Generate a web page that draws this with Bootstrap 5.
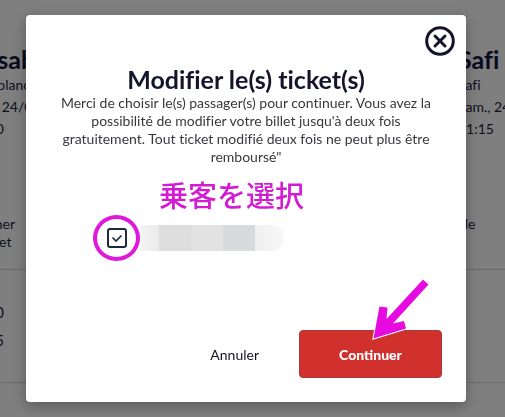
<!DOCTYPE html>
<html lang="fr">
<head>
<meta charset="utf-8">
<meta name="viewport" content="width=device-width, initial-scale=1">
<title>Modifier le(s) ticket(s)</title>
<link href="https://cdn.jsdelivr.net/npm/bootstrap@5.3.0/dist/css/bootstrap.min.css" rel="stylesheet">
<style>
body { font-family: Lato, sans-serif; font-size: 14px; line-height: 18px; font-variant-ligatures: none; color: #10101c; background: #7f7f7f; }
.trip-page { min-height: 100vh; }
.trip-title { font-size: 25px; line-height: 30px; font-weight: 700; color: #0b0b20; }
.trip-top { height: 269px; padding-top: 44px; }
.trip-from { margin-left: -32px; }
.trip-to { width: 47px; }
.trip-line { line-height: 22px; }
.trip-note { margin-top: 75px; }
.trip-note-from { width: 47px; }
.trip-prices { border-top: 1px solid #6b6b6b; border-bottom: 1px solid #6b6b6b; padding: 28px 0; line-height: 28px; font-size: 15px; }
.trip-amount { width: 36px; margin-left: -32px; }
.overlay { padding: 15px 39px 15px 26px; }
.dialog-box { background: #fff; border-radius: 4px; min-height: 387px; box-shadow: 0 4px 14px rgba(0,0,0,.3); padding: 11px 24px 24px; }
.close-btn { width: 30px; height: 30px; margin-right: -13px; }
.dialog-title { font-size: 25px; line-height: 30px; font-weight: 700; color: #14142b; margin-top: 8px; }
.dialog-text { color: #38383f; }
.hint { font: 500 29px/32px "Noto Sans CJK JP", sans-serif; color: #d31bd3; margin-top: 12px; padding-left: 109px; }
.passenger { margin: 5px 0 0 43px; height: 46px; }
.ring { width: 47px; height: 46px; border: 4px solid #df18dc; border-radius: 50%; }
.pass-check.form-check-input { width: 20px; height: 20px; border: 2px solid #1b2a40; border-radius: 3px; background-color: #fff; }
.pass-check.form-check-input:checked { border-color: #1b2a40; background-color: #fff; background-size: 16px 16px; background-image: url("data:image/svg+xml,%3Csvg xmlns='http://www.w3.org/2000/svg' viewBox='0 0 16 16'%3E%3Cpath d='M3.500 7.500l3.500 3.500 5.500-5.500' fill='none' stroke='%231b2a40' stroke-width='1.700'/%3E%3C/svg%3E"); }
.masked-name { width: 144px; height: 26px; border-radius: 0 12px 12px 0; background: linear-gradient(90deg, #f4f4f4 0, #ebebeb 19px, #dededf 19px 51px, #e2e2e3 51px 83px, #d9dadc 83px 115px, #efefef 115px, #f8f8f8); }
.cancel-btn { font-size: 14px; color: #14141f; margin-right: 28px; }
.continue-btn { width: 143px; height: 48px; border-radius: 4px; font-size: 14px; font-weight: 900; color: #fff; background: #d0312d; border: 1px solid #aa3838; }
.continue-btn:hover { background: #b92a27; color: #fff; }
.arrow { right: 14px; bottom: 35px; }
</style>
<script src="https://cdn.jsdelivr.net/npm/bootstrap@5.3.0/dist/js/bootstrap.bundle.min.js"></script>
</head>
<body>
<div class="trip-page overflow-hidden" aria-hidden="true">
  <div class="trip-top d-flex justify-content-between text-nowrap">
    <div class="trip-from">
      <div class="trip-title">Casablanca</div>
      <div class="trip-line">Casablanca</div>
      <div class="trip-line">Ven., 24/07</div>
      <div class="trip-line">10:00</div>
      <div class="trip-note trip-note-from text-end">Dîner<br>et&nbsp;</div>
    </div>
    <div class="trip-to">
      <div class="trip-title">Safi</div>
      <div class="trip-line">Safi</div>
      <div class="trip-line">Sam., 24/07</div>
      <div class="trip-line">11:15</div>
      <div class="trip-note">ille</div>
    </div>
  </div>
  <div class="trip-prices">
    <div class="trip-amount text-end">0</div>
    <div class="trip-amount text-end">5</div>
  </div>
</div>

<div class="overlay position-fixed top-0 start-0 w-100 h-100">
  <div class="dialog-box position-relative d-flex flex-column" role="dialog" aria-modal="true" aria-labelledby="dialogTitle">
    <button type="button" class="close-btn btn p-0 border-0 align-self-end d-flex" aria-label="Fermer">
      <svg width="30" height="30" viewBox="0 0 30 30" fill="none" stroke="#14142b" stroke-width="3"><circle cx="15" cy="15" r="13.3"/><path d="M10 10l10 10M20 10L10 20" stroke-linecap="round"/></svg>
    </button>
    <h1 id="dialogTitle" class="dialog-title text-center mb-0">Modifier le(s) ticket(s)</h1>
    <p class="dialog-text text-center mb-0">Merci de choisir le(s) passager(s) pour continuer. Vous avez la possibilité de modifier votre billet jusqu'à deux fois gratuitement. Tout ticket modifié deux fois ne peut plus être remboursé"</p>
    <div class="hint" lang="ja">乗客を選択</div>
    <div class="passenger d-flex align-items-center">
      <span class="ring d-flex align-items-center justify-content-center">
        <input id="passenger" class="pass-check form-check-input m-0" type="checkbox" checked aria-label="Passager">
      </span>
      <label for="passenger" class="masked-name"></label>
    </div>
    <div class="d-flex justify-content-end align-items-center mt-auto">
      <button type="button" class="cancel-btn btn border-0">Annuler</button>
      <button type="button" class="continue-btn btn">Continuer</button>
    </div>
    <svg class="arrow position-absolute pe-none" width="80" height="90" viewBox="0 0 80 90" aria-hidden="true"><path d="M51 2.500L56.500 7.500 21 46.500 32 44 34 51.500 1.500 61.500 7.500 29.500 15.500 30.500 14.500 42z" fill="#e60ae0" stroke="#fff" stroke-width="2" paint-order="stroke"/></svg>
  </div>
</div>
</body>
</html>
